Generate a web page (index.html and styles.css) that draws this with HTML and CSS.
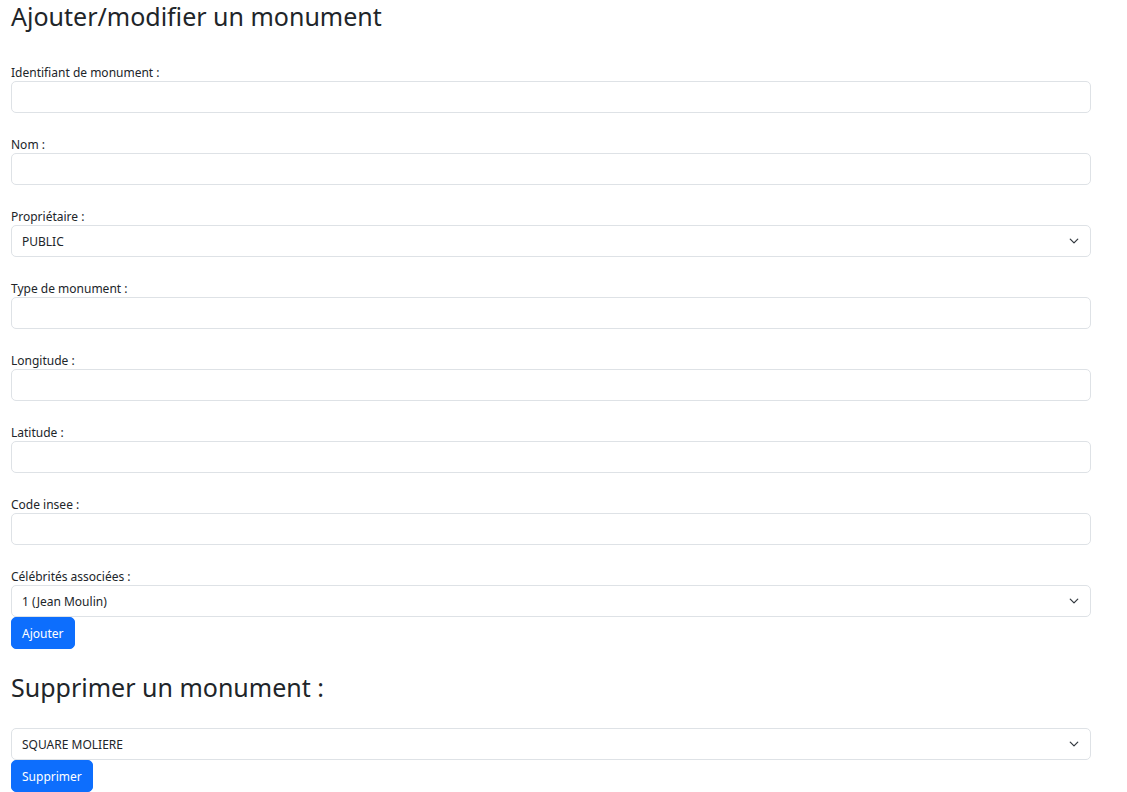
FILE: index.html
```html
<!DOCTYPE html>
<html lang="fr">
<head>
<meta charset="utf-8">
<title>Monuments</title>
<link rel="stylesheet" href="styles.css">
</head>
<body>
<main class="page">
  <h2 class="title">Ajouter/modifier un monument</h2>
  <form class="form">
    <div class="field">
      <label class="label" for="id">Identifiant de monument :</label>
      <input class="control" id="id" type="text">
    </div>
    <div class="field">
      <label class="label" for="nom">Nom :</label>
      <input class="control" id="nom" type="text">
    </div>
    <div class="field">
      <label class="label" for="prop">Propriétaire :</label>
      <div class="select-wrap">
        <select class="control select" id="prop"><option>PUBLIC</option><option>PRIVE</option></select>
        <svg class="chevron" viewBox="0 0 16 16" aria-hidden="true"><path d="m2 5 6 6 6-6" fill="none" stroke="#343a40" stroke-width="2" stroke-linecap="round" stroke-linejoin="round"/></svg>
      </div>
    </div>
    <div class="field">
      <label class="label" for="type">Type de monument :</label>
      <input class="control" id="type" type="text">
    </div>
    <div class="field">
      <label class="label" for="lon">Longitude :</label>
      <input class="control" id="lon" type="text">
    </div>
    <div class="field">
      <label class="label" for="lat">Latitude :</label>
      <input class="control" id="lat" type="text">
    </div>
    <div class="field">
      <label class="label" for="insee">Code insee :</label>
      <input class="control" id="insee" type="text">
    </div>
    <div class="field field-last">
      <label class="label" for="celeb">Célébrités associées :</label>
      <div class="select-wrap">
        <select class="control select" id="celeb"><option>1 (Jean Moulin)</option></select>
        <svg class="chevron" viewBox="0 0 16 16" aria-hidden="true"><path d="m2 5 6 6 6-6" fill="none" stroke="#343a40" stroke-width="2" stroke-linecap="round" stroke-linejoin="round"/></svg>
      </div>
    </div>
    <button class="btn" type="button">Ajouter</button>
  </form>

  <h2 class="title title-second">Supprimer un monument :</h2>
  <form class="form">
    <div class="select-wrap">
      <select class="control select" id="suppr"><option>SQUARE MOLIERE</option></select>
      <svg class="chevron" viewBox="0 0 16 16" aria-hidden="true"><path d="m2 5 6 6 6-6" fill="none" stroke="#343a40" stroke-width="2" stroke-linecap="round" stroke-linejoin="round"/></svg>
    </div>
    <button class="btn" type="button">Supprimer</button>
  </form>
</main>
</body>
</html>
```

FILE: styles.css
```css
* { box-sizing: border-box; }

html, body {
  margin: 0;
  padding: 0;
  background: #ffffff;
}

body {
  font-family: "Noto Sans", "Open Sans", "DejaVu Sans", sans-serif;
  font-size: 12px;
  color: #212529;
}

.page {
  width: 1091px;
  padding-left: 11px;
}

.title {
  margin: 0;
  padding-top: 1px;
  height: 31px;
  font-size: 25px;
  font-weight: 400;
  line-height: 31px;
  color: #212529;
}

.title-second {
  margin-top: 22px;
  margin-bottom: 26px;
}

.form {
  margin: 0;
}

.title + .form {
  margin-top: 31px;
}

.title-second + .form {
  margin-top: 0;
}

.field {
  margin-bottom: 21px;
}

.field-last {
  margin-bottom: 0;
}

.label {
  display: block;
  line-height: 19px;
  height: 19px;
  padding-top: 1px;
}

.control {
  display: block;
  width: 100%;
  height: 32px;
  margin: 0;
  padding: 0 10px;
  font-family: inherit;
  font-size: 12px;
  color: #212529;
  background: #ffffff;
  border: 1px solid #dee2e6;
  border-radius: 5px;
  outline: none;
}

.select-wrap {
  position: relative;
}

.select {
  appearance: none;
  -webkit-appearance: none;
  padding-right: 36px;
}

.chevron {
  position: absolute;
  right: 12px;
  top: 11px;
  width: 10px;
  height: 10px;
  pointer-events: none;
}

.btn {
  display: block;
  height: 32px;
  margin: 0;
  padding: 0 10px;
  font-family: inherit;
  font-size: 12px;
  color: #ffffff;
  background: #0d6efd;
  border: 1px solid #0d6efd;
  border-radius: 5px;
  cursor: pointer;
}
```
